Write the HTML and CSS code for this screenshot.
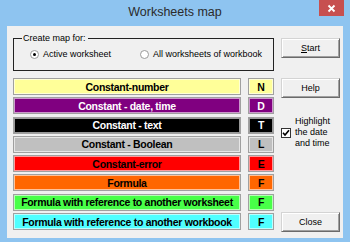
FILE: index.html
```html
<!DOCTYPE html>
<html lang="en">
<head>
    <meta charset="UTF-8">
    <title>Worksheets map</title>
    <link rel="stylesheet" href="styles.css">
</head>
<body>
    <div class="window">
        <div class="titlebar">
            <span></span>
            <span class="title">Worksheets map</span>
            <span class="close-btn">
                <svg width="9" height="9" viewBox="0 0 9 9"><path d="M1.5 1.5 L7.5 7.5 M7.5 1.5 L1.5 7.5" stroke="#fff" stroke-width="1.8" fill="none"/></svg>
            </span>
        </div>

        <div class="client">
            <div class="main">
                <!-- scope -->
                <fieldset class="group">
                    <legend>Create map for:</legend>
                    <div class="radios">
                        <label class="radio"><span class="dot checked"></span>Active worksheet</label>
                        <label class="radio second"><span class="dot"></span>All worksheets of workbook</label>
                    </div>
                </fieldset>

                <!-- colour key -->
                <div class="entries">
                    <div class="entry"><div class="bar c-number">Constant-number</div><div class="key c-number">N</div></div>
                    <div class="entry"><div class="bar c-date">Constant - date, time</div><div class="key c-date">D</div></div>
                    <div class="entry"><div class="bar c-text">Constant - text</div><div class="key c-text">T</div></div>
                    <div class="entry"><div class="bar c-bool">Constant - Boolean</div><div class="key c-bool">L</div></div>
                    <div class="entry"><div class="bar c-error">Constant-error</div><div class="key c-error">E</div></div>
                    <div class="entry"><div class="bar c-formula">Formula</div><div class="key c-formula">F</div></div>
                    <div class="entry"><div class="bar c-sheet">Formula with reference to another worksheet</div><div class="key c-sheet">F</div></div>
                    <div class="entry"><div class="bar c-book">Formula with reference to another workbook</div><div class="key c-book">F</div></div>
                </div>
            </div>

            <div class="side">
                <button class="btn"><u>S</u>tart</button>
                <button class="btn btn-help">Help</button>
                <label class="highlight">
                    <span class="checkbox">
                        <svg width="8" height="8" viewBox="0 0 8 8"><path d="M1 3.8 L3 6 L7 1.2" stroke="#000" stroke-width="1.6" fill="none"/></svg>
                    </span>
                    <span class="highlight-text">Highlight<br>the date<br>and time</span>
                </label>
                <button class="btn btn-close">Close</button>
            </div>
        </div>
    </div>
</body>
</html>
```

FILE: styles.css
```css
/* styles.css */
body {
    margin: 0;
    font-family: "Liberation Sans", Arial, sans-serif;
    font-size: 9px;
    color: #000;
}

.window {
    width: 350px;
    height: 242px;
    background-color: #8ec4f0;
    display: flex;
    flex-direction: column;
}

.titlebar {
    height: 26px;
    display: grid;
    grid-template-columns: 1fr auto 1fr;
    align-items: start;
}

.title {
    font-size: 12.5px;
    line-height: 25px;
    color: #2b2b2b;
}

.close-btn {
    justify-self: end;
    width: 25px;
    height: 16px;
    margin-right: 6px;
    background-color: #c75050;
    display: flex;
    align-items: center;
    justify-content: center;
}

.client {
    flex: 1;
    margin: 0 7px 4px 7px;
    background-color: #f0f0f0;
    display: flex;
    padding-left: 6px;
}

.main {
    width: 261px;
    padding-top: 7px;
}

.group {
    margin: 0;
    padding: 0 8px 10px 8px;
    border: 1px solid #222;
    min-inline-size: 0;
}

.group legend {
    padding: 0 2px 0 1px;
    line-height: 10px;
}

.radios {
    display: flex;
    margin-top: 6px;
    margin-left: 8px;
}

.radio {
    display: flex;
    align-items: center;
    gap: 4px;
    line-height: 11px;
}

.radio.second {
    margin-left: 29px;
}

.dot {
    width: 7px;
    height: 7px;
    border: 1px solid #9a9a9a;
    border-radius: 50%;
    background-color: #fff;
    display: flex;
    align-items: center;
    justify-content: center;
}

.dot.checked::after {
    content: "";
    width: 3px;
    height: 3px;
    border-radius: 50%;
    background-color: #000;
}

.entries {
    margin-top: 7px;
    display: flex;
    flex-direction: column;
    gap: 2.3px;
}

.entry {
    display: flex;
    gap: 7px;
    height: 17px;
}

.bar,
.key {
    box-sizing: border-box;
    border: 1px solid #a0a0a0;
    box-shadow: inset 0 0 0 1px rgba(255, 255, 255, 0.6);
    font-weight: bold;
    font-size: 10.5px;
    letter-spacing: -0.3px;
    display: flex;
    align-items: center;
    justify-content: center;
}

.bar {
    flex: 1;
}

.key {
    width: 26px;
}

.c-number { background-color: #ffff99; }
.c-date { background-color: #800080; color: #fff; }
.c-text { background-color: #000; color: #fff; }
.c-bool { background-color: #c0c0c0; }
.c-error { background-color: #ff0000; }
.c-formula { background-color: #ff6600; }
.c-sheet { background-color: #48ff48; }
.c-book { background-color: #50ffff; }

.side {
    width: 59px;
    margin-left: 7px;
    padding: 12px 0 6px 0;
    display: flex;
    flex-direction: column;
}

.btn {
    height: 20px;
    padding: 0;
    font-family: inherit;
    font-size: 9px;
    color: #000;
    background-color: #f0f0f0;
    border: 1px solid;
    border-color: #d4d4d4 #6a6a6a #6a6a6a #d4d4d4;
    box-shadow: inset 1px 1px 0 #fff, inset -1px -1px 0 #a0a0a0;
}

.btn-help {
    margin-top: 20px;
}

.btn-close {
    margin-top: auto;
}

.highlight {
    margin-top: 18px;
    display: flex;
    align-items: center;
    gap: 4px;
}

.checkbox {
    width: 8px;
    height: 8px;
    border: 1px solid #333;
    background-color: #fff;
    display: flex;
    align-items: center;
    justify-content: center;
}

.highlight-text {
    line-height: 11px;
}
```
